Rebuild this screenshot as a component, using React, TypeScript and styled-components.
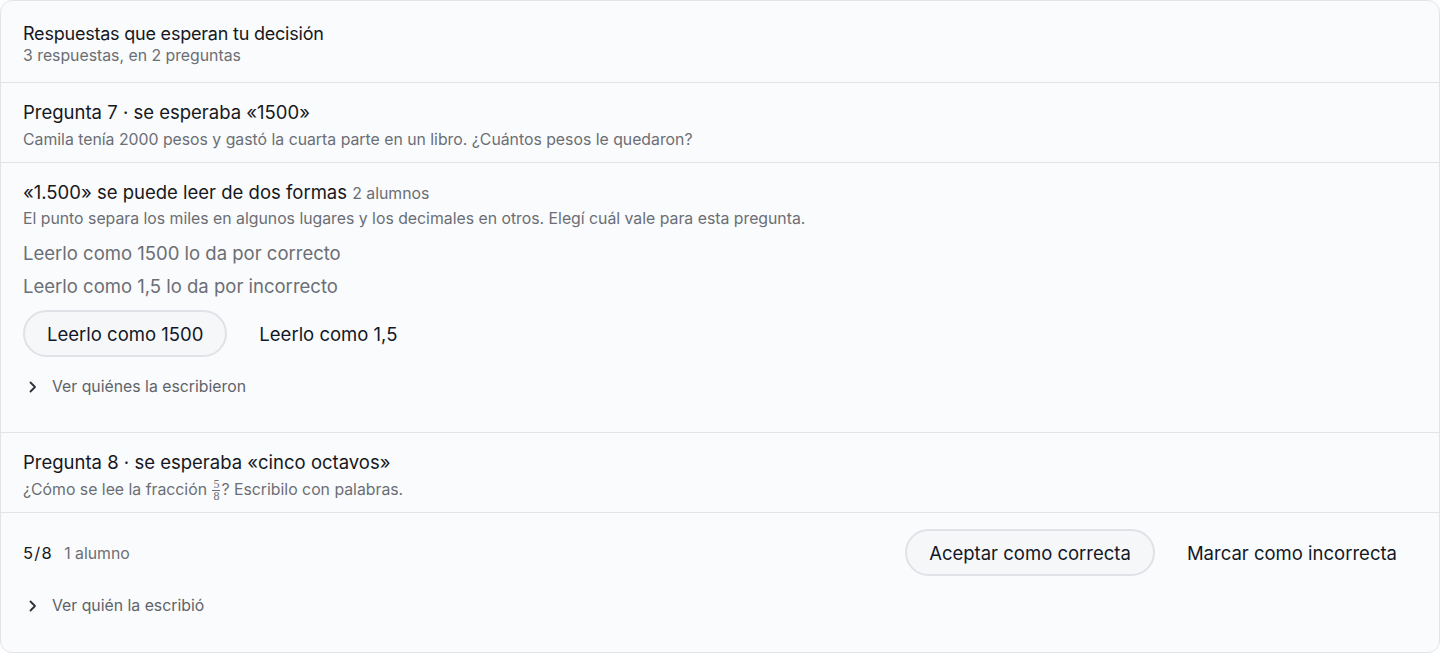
import styled, { createGlobalStyle } from 'styled-components';

const GlobalStyle = createGlobalStyle`
  html, body {
    margin: 0;
    padding: 0;
    background: #ffffff;
  }
  body {
    font-family: Inter, "Noto Sans", "Liberation Sans", sans-serif;
    color: #16181d;
    -webkit-font-smoothing: antialiased;
  }
`;

const Chevron = () => (
  <svg width="10" height="12" viewBox="0 0 10 12" fill="none">
    <path d="M2.5 1.5 L7 6 L2.5 10.5" stroke="currentColor" strokeWidth="1.8" strokeLinecap="round" strokeLinejoin="round" />
  </svg>
);

const App = () => {
  return (
    <>
      <GlobalStyle />
      <Card>
        <Header>
          <HeaderTitle>Respuestas que esperan tu decisión</HeaderTitle>
          <Muted>3 respuestas, en 2 preguntas</Muted>
        </Header>

        <Question>
          <QuestionTitle>Pregunta 7 · se esperaba «1500»</QuestionTitle>
          <Muted>
            Camila tenía 2000 pesos y gastó la cuarta parte en un libro. ¿Cuántos pesos le quedaron?
          </Muted>
        </Question>

        <Block>
          <QuestionTitle>
            «1.500» se puede leer de dos formas <Count>2 alumnos</Count>
          </QuestionTitle>
          <Hint>
            El punto separa los miles en algunos lugares y los decimales en otros. Elegí cuál vale para esta
            pregunta.
          </Hint>
          <Outcomes>
            <Outcome>Leerlo como 1500 lo da por correcto</Outcome>
            <Outcome>Leerlo como 1,5 lo da por incorrecto</Outcome>
          </Outcomes>
          <Actions>
            <PillButton $outlined>Leerlo como 1500</PillButton>
            <PillButton>Leerlo como 1,5</PillButton>
          </Actions>
          <Disclosure>
            <Chevron />
            <span>Ver quiénes la escribieron</span>
          </Disclosure>
        </Block>

        <Question>
          <QuestionTitle>Pregunta 8 · se esperaba «cinco octavos»</QuestionTitle>
          <Muted>
            ¿Cómo se lee la fracción{' '}
            <Fraction>
              <span>5</span>
              <span>8</span>
            </Fraction>
            ? Escribilo con palabras.
          </Muted>
        </Question>

        <Block $last>
          <AnswerRow>
            <AnswerText>
              <Answer>5/8</Answer>
              <Count>1 alumno</Count>
            </AnswerText>
            <Actions $inline>
              <PillButton $outlined>Aceptar como correcta</PillButton>
              <PillButton>Marcar como incorrecta</PillButton>
            </Actions>
          </AnswerRow>
          <Disclosure>
            <Chevron />
            <span>Ver quién la escribió</span>
          </Disclosure>
        </Block>
      </Card>
    </>
  );
};

export default App;

// Estilos
const Card = styled.div`
  box-sizing: border-box;
  width: 1440px;
  height: 653px;
  background: #fafbfc;
  border: 1px solid #e2e4e8;
  border-radius: 12px;
  overflow: hidden;
  display: flex;
  flex-direction: column;
`;

const Header = styled.div`
  padding: 21px 22px 16px;
  border-bottom: 1px solid #e2e4e8;
  display: flex;
  flex-direction: column;
`;

const HeaderTitle = styled.div`
  font-size: 18px;
  line-height: 24px;
  letter-spacing: -0.012em;
  color: #16181d;
`;

const Muted = styled.div`
  font-size: 15.8px;
  line-height: 20px;
  color: #6b6e75;
`;

const Question = styled.div`
  padding: 16px 22px 12px;
  border-bottom: 1px solid #e2e4e8;
  display: flex;
  flex-direction: column;
  gap: 5px;
`;

const QuestionTitle = styled.div`
  font-size: 18.5px;
  line-height: 26px;
  color: #16181d;
`;

const Count = styled.span`
  font-size: 15.8px;
  color: #6b6e75;
`;

const Hint = styled(Muted)`
  margin-top: 2px;
`;

const Block = styled.div<{ $last?: boolean }>`
  padding: 16px 22px 35px;
  border-bottom: ${(p) => (p.$last ? 'none' : '1px solid #e2e4e8')};
  display: flex;
  flex-direction: column;
  flex: ${(p) => (p.$last ? '1' : 'none')};
`;

const Outcomes = styled.div`
  margin-top: 10px;
  display: flex;
  flex-direction: column;
  gap: 5px;
`;

const Outcome = styled.div`
  font-size: 18.5px;
  line-height: 28px;
  color: #6b6e75;
`;

const Actions = styled.div<{ $inline?: boolean }>`
  display: flex;
  align-items: center;
  gap: 8px;
  margin-top: ${(p) => (p.$inline ? '0' : '10px')};
`;

const PillButton = styled.button<{ $outlined?: boolean }>`
  box-sizing: border-box;
  height: 47px;
  padding: 0 22px;
  border-radius: 24px;
  border: 2px solid ${(p) => (p.$outlined ? '#dfe2e6' : 'transparent')};
  background: ${(p) => (p.$outlined ? '#f6f7f9' : 'transparent')};
  font-family: Inter, "Liberation Sans", sans-serif;
  font-size: 18.5px;
  color: #121826;
  cursor: pointer;
`;

const Disclosure = styled.div`
  margin-top: 20px;
  display: flex;
  align-items: center;
  gap: 14px;
  padding-left: 5px;
  font-size: 15.8px;
  line-height: 20px;
  color: #5f636a;

  svg {
    color: #2d3038;
  }
`;

const AnswerRow = styled.div`
  display: flex;
  align-items: center;
  justify-content: space-between;
  margin-right: -4px;
`;

const AnswerText = styled.div`
  display: flex;
  align-items: baseline;
  gap: 11px;
`;

const Answer = styled.span`
  font-size: 16.5px;
  letter-spacing: 0.08em;
  color: #16181d;
`;

const Fraction = styled.span`
  display: inline-flex;
  flex-direction: column;
  align-items: center;
  vertical-align: middle;
  font-family: "Liberation Serif", serif;
  font-size: 12px;
  line-height: 11px;
  margin: -6px 1px;

  span:first-child {
    border-bottom: 1px solid #6b6e75;
    padding: 0 1px;
  }
`;
